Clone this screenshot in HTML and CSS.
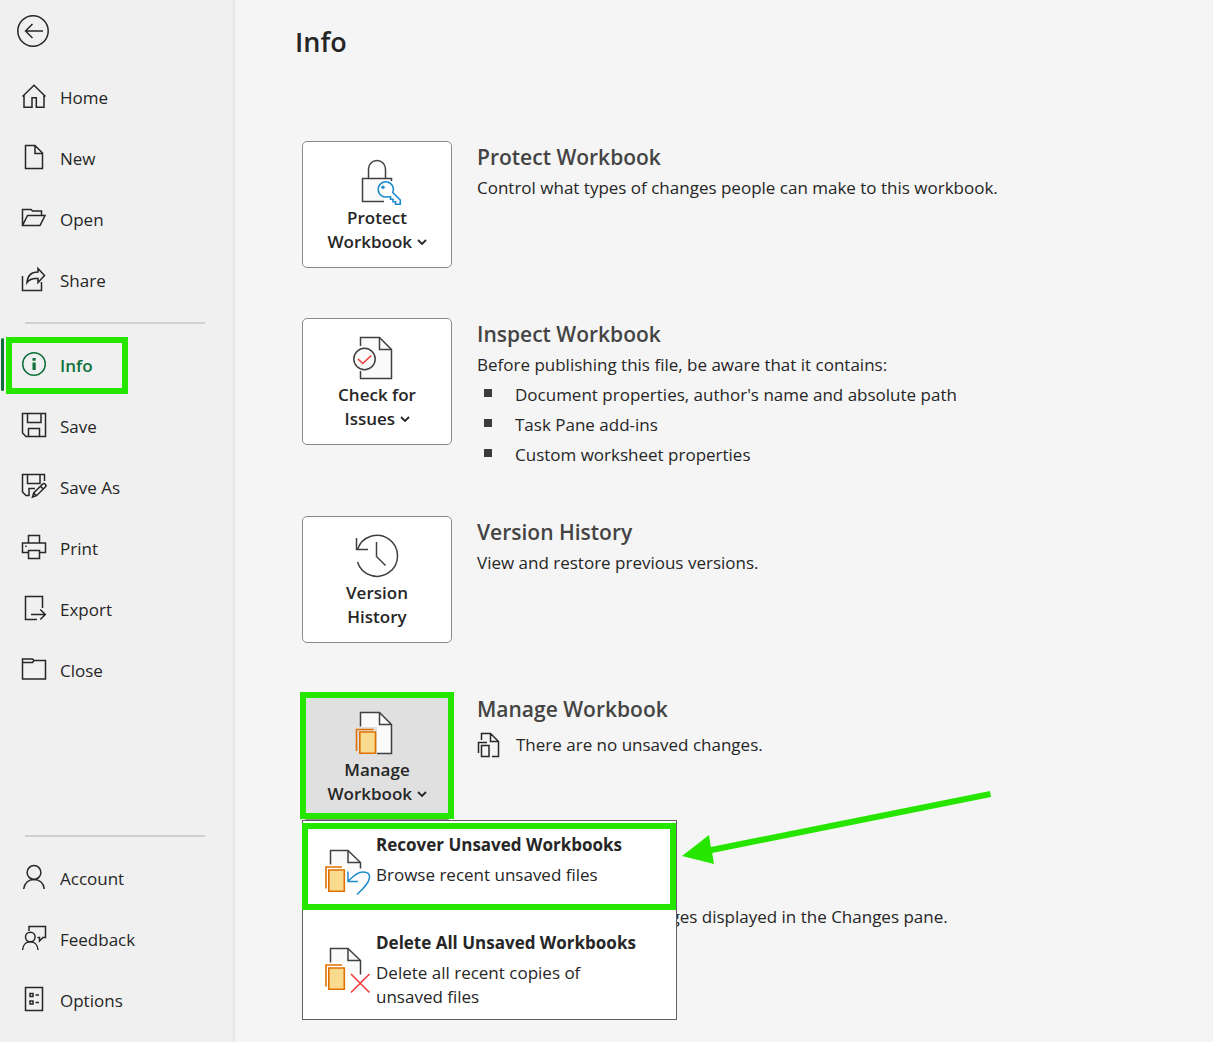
FILE: index.html
```
<!DOCTYPE html>
<html lang="en">
<head>
    <meta charset="UTF-8">
    <meta name="viewport" content="width=device-width, initial-scale=1.0">
    <title>Info</title>
    <link rel="stylesheet" href="styles.css">
</head>
<body>
    <div class="app">
        <nav class="sidebar">
            <button class="back" aria-label="Back">
                <svg width="32" height="32" viewBox="0 0 32 32"><circle cx="16" cy="16" r="15.2"/><path d="M26 16H8.5M15.5 9l-7 7 7 7"/></svg>
            </button>

            <ul class="nav-list">
                <li><a href="#" class="nav-item">
                    <svg class="icon" viewBox="0 0 24 24"><path d="M.5 12.5L12 1.2l11.5 11.3M2 11.5v11.8h8v-9.6h4.3v9.6H22V11.5"/></svg>
                    Home</a></li>
                <li><a href="#" class="nav-item">
                    <svg class="icon" viewBox="0 0 24 24"><path d="M3.5 .5H13L20.500 8v15.500h-17zM13 .5V8.500h7.500"/></svg>
                    New</a></li>
                <li><a href="#" class="nav-item">
                    <svg class="icon" viewBox="0 0 24 24"><path d="M.5 19.500v-16H9L10.500 5h9v4.500M.5 19.500l5-10H23l-5 10z"/></svg>
                    Open</a></li>
                <li><a href="#" class="nav-item">
                    <svg class="icon" viewBox="0 0 24 24"><path d="M.5 9v14.500h19V15M16 1.500l6.500 7-6.500 7v-4C11 11 7.500 12 5 15.500 5.500 9 9.500 5 16 5z"/></svg>
                    Share</a></li>
            </ul>

            <hr class="divider">

            <ul class="nav-list">
                <li><a href="#" class="nav-item active">
                    <svg class="icon" viewBox="0 0 24 24"><circle cx="12" cy="12" r="11.3"/><path class="solid" d="M10.500 6h3.200v2.800h-3.200zM10.500 10.500h3.200V18h-3.200z"/></svg>
                    Info</a></li>
                <li><a href="#" class="nav-item">
                    <svg class="icon" viewBox="0 0 24 24"><path d="M.5 .5h23v23H4L.5 20zM5.500 .5v9H19v-9M6.500 23.500v-8h11v8"/></svg>
                    Save</a></li>
                <li><a href="#" class="nav-item">
                    <svg class="icon" viewBox="0 0 24 24"><path d="M22.500 7V.5H.5V18L4 21.500h3v-7h6M5.500 .5v9H18v-9M10.500 23l1.200-4L20.500 10.200a1.900 1.900 0 0 1 2.800 2.800L14.500 21.700zM18.500 12.200l2.800 2.800M11.700 19l2.800 2.700"/></svg>
                    Save As</a></li>
                <li><a href="#" class="nav-item">
                    <svg class="icon" viewBox="0 0 24 24"><path d="M6.500 17.500h-6V8h23v9.500h-6M6.500 8V.5h11V8M6.500 15.500h11v8h-11z"/><path class="solid" d="M3.200 10.500h1.500V12H3.200z"/></svg>
                    Print</a></li>
                <li><a href="#" class="nav-item">
                    <svg class="icon" viewBox="0 0 24 24"><path d="M15 23.500H3.500V.5h17V12M9 18.500h14M18.300 13.500l5 5-5 5"/></svg>
                    Export</a></li>
                <li><a href="#" class="nav-item">
                    <svg class="icon" viewBox="0 0 24 24"><path d="M.5 2h10L12 3.500h11.500V22H.5zM.5 5.500h10l1.500-2"/></svg>
                    Close</a></li>
            </ul>

            <div class="nav-bottom">
                <hr class="divider">
                <ul class="nav-list">
                    <li><a href="#" class="nav-item">
                        <svg class="icon" viewBox="0 0 24 24"><circle cx="12" cy="7.500" r="6.900"/><path d="M1.700 24C2.200 18 6.500 14.400 12 14.400S21.800 18 22.300 24"/></svg>
                        Account</a></li>
                    <li><a href="#" class="nav-item">
                        <svg class="icon" viewBox="0 0 24 24"><path d="M7 5V.5h16.500v11H21L17.500 15v-3.500h-2"/><circle cx="8.300" cy="11" r="4.800"/><path d="M.6 24c.3-5 3.500-8.200 7.700-8.200S15.700 19 16 24"/></svg>
                        Feedback</a></li>
                    <li><a href="#" class="nav-item">
                        <svg class="icon" viewBox="0 0 24 24"><path d="M3.500 .5h17v23h-17zM8 6.500h3v3H8zM8 14h3v3H8zM13.500 8H17M13.500 15.500H17"/></svg>
                        Options</a></li>
                </ul>
            </div>
        </nav>

        <main class="content">
            <h1>Info</h1>

            <section class="row">
                <button class="tile">
                    <svg class="tile-icon" viewBox="0 0 48 48">
                        <path class="page" d="M31 44.500H9.500v-23h29V24"/>
                        <path class="line" d="M15.500 21.500V12a8.500 8.500 0 0 1 17 0v9.500"/>
                        <path class="key" d="M39.800 35.500A7.600 7.600 0 1 0 35 39.700h2.500v2.500H40v2.500h2.500v2.600h4.800V43z"/>
                        <circle class="key-dot" cx="30" cy="30.300" r="1.700"/>
                    </svg>
                    <span>Protect<br>Workbook <svg class="chevron" viewBox="0 0 10 6"><path d="M1 1l4 4 4-4"/></svg></span>
                </button>
                <div class="info">
                    <h2>Protect Workbook</h2>
                    <p>Control what types of changes people can make to this workbook.</p>
                </div>
            </section>

            <section class="row">
                <button class="tile">
                    <svg class="tile-icon" viewBox="0 0 48 48">
                        <path class="page-fill" d="M7.500 3.500h19l12 12v29h-31z"/>
                        <path class="line" d="M7.500 12V3.500h19l12 12v29h-31V37"/>
                        <path class="line" d="M26.500 3.500v12h12"/>
                        <circle class="page" cx="11.500" cy="25" r="10.700"/>
                        <path class="red" d="M5 25l4.700 4.500L18.300 21.500"/>
                    </svg>
                    <span>Check for<br>Issues <svg class="chevron" viewBox="0 0 10 6"><path d="M1 1l4 4 4-4"/></svg></span>
                </button>
                <div class="info">
                    <h2>Inspect Workbook</h2>
                    <p>Before publishing this file, be aware that it contains:</p>
                    <ul class="issues">
                        <li>Document properties, author's name and absolute path</li>
                        <li>Task Pane add-ins</li>
                        <li>Custom worksheet properties</li>
                    </ul>
                </div>
            </section>

            <section class="row">
                <button class="tile">
                    <svg class="tile-icon" viewBox="0 0 48 48">
                        <path class="line" d="M3.500 6v11.500H15M4.600 17.300A20.500 20.500 0 1 1 4.500 30M23.500 10v14.500l9 9"/>
                    </svg>
                    <span>Version<br>History</span>
                </button>
                <div class="info">
                    <h2>Version History</h2>
                    <p>View and restore previous versions.</p>
                </div>
            </section>

            <section class="row">
                <div class="dropdown">
                    <button class="tile open" aria-expanded="true">
                        <svg class="tile-icon" viewBox="0 0 48 48">
                            <path class="page-fill" d="M7.500 18V3.500h19l12 12v29H24V18z"/>
                            <path class="line" d="M7.500 17.500v-14h19l12 12v29H24M26.500 3.500v12h12"/>
                            <path class="orange-line" d="M3.500 42V20.500h17"/>
                            <path class="orange" d="M6.800 23h15.700v21.300H6.800z"/>
                        </svg>
                        <span>Manage<br>Workbook <svg class="chevron" viewBox="0 0 10 6"><path d="M1 1l4 4 4-4"/></svg></span>
                    </button>
                    <div class="menu">
                        <button class="menu-item marked">
                            <svg class="menu-icon" viewBox="0 0 48 48">
                                <path class="page-fill" d="M6.500 2.500H24l12.500 12V24l-14 4V17h-16z"/>
                                <path class="line" d="M6.500 16.500v-14H24l12.500 12v6M24 2.500v12h12.500"/>
                                <path class="orange-line" d="M2 40.500V19h16"/>
                                <path class="orange" d="M4.800 22h15.500v21.300H4.800z"/>
                                <path class="blue" d="M24 23.500v10h10M24.300 33C30 27 34 24 39 24c4.500 0 7 2 6.500 5.500C45 35 40 40 33 46.500"/>
                            </svg>
                            <span class="menu-text">
                                <strong>Recover Unsaved Workbooks</strong>
                                <span>Browse recent unsaved files</span>
                            </span>
                        </button>
                        <button class="menu-item">
                            <svg class="menu-icon" viewBox="0 0 48 48">
                                <path class="page-fill" d="M6.500 2.500H24l12.500 12V28l-14 2V17h-16z"/>
                                <path class="line" d="M6.500 16.500v-14H24l12.500 12v14M24 2.500v12h12.500"/>
                                <path class="orange-line" d="M2 40.500V19h16"/>
                                <path class="orange" d="M4.800 22h15.500v21.300H4.800z"/>
                                <path class="red" d="M27 28l18.500 18.500M45.500 28L27 46.500"/>
                            </svg>
                            <span class="menu-text">
                                <strong>Delete All Unsaved Workbooks</strong>
                                <span>Delete all recent copies of unsaved files</span>
                            </span>
                        </button>
                    </div>
                    <svg class="arrow" viewBox="0 0 312 72"><path d="M0 62L27 41l1.800 12L308 -3l1 6L30.200 59l1.800 11z"/></svg>
                </div>
                <div class="info">
                    <h2>Manage Workbook</h2>
                    <p class="status">
                        <svg class="status-icon" viewBox="0 0 22 24"><path d="M3.500 7V.5h9l8 8v15H14M12.500 .5v8h8M.5 20V9.500H9M3.500 12.500H11v11H3.500z"/></svg>
                        There are no unsaved changes.
                    </p>
                </div>
            </section>

            <section class="row changes">
                <p>changes displayed in the Changes pane.</p>
            </section>
        </main>
    </div>
</body>
</html>
```
FILE: styles.css
```
*,
*::before,
*::after {
    margin: 0;
    padding: 0;
    box-sizing: border-box;
}

body {
    font-family: "Open Sans", "Noto Sans", sans-serif;
    font-size: 17px;
    color: #262626;
    background-color: #f5f5f5;
}

button {
    font: inherit;
    color: inherit;
    cursor: pointer;
}

ul {
    list-style: none;
}

svg {
    fill: none;
    stroke: #262626;
    stroke-width: 1.5;
    flex-shrink: 0;
    overflow: visible;
}

.app {
    display: flex;
    min-height: 100vh;
}

/* Sidebar */
.sidebar {
    display: flex;
    flex-direction: column;
    width: 235px;
    flex-shrink: 0;
    padding: 15px 0 11px;
    background-color: #f0f0f0;
    border-right: 2px solid #e6e6e6;
}

.back {
    width: 32px;
    height: 32px;
    margin: 0 0 20px 17px;
    background: none;
    border: none;
}

.back svg {
    display: block;
}

.nav-item {
    display: flex;
    align-items: center;
    gap: 14px;
    height: 61px;
    padding-left: 22px;
    color: #262626;
    text-decoration: none;
}

.icon {
    width: 24px;
    height: 24px;
    margin-bottom: 3px;
}

.icon .solid {
    fill: currentColor;
    stroke: none;
}

.divider {
    height: 2px;
    margin: 11px 28px 11px 25px;
    border: none;
    background-color: #d0d0d0;
}

.nav-item.active {
    position: relative;
    color: #0f703b;
    font-weight: 600;
}

.nav-item.active svg {
    stroke: #0f703b;
}

.nav-item.active::before {
    content: "";
    position: absolute;
    left: 1px;
    top: 3px;
    width: 3px;
    height: 53px;
    border-radius: 2px;
    background-color: #0f703b;
}

/* Green marker boxes */
.nav-item.active::after,
.tile.open::after,
.menu-item.marked::after {
    content: "";
    position: absolute;
    border: 6px solid #26e600;
}

.nav-item.active::after {
    left: 6px;
    top: 2px;
    width: 122px;
    height: 57px;
}

.nav-bottom {
    margin-top: auto;
}

/* Content */
.content {
    flex: 1;
    padding: 22px 60px 0;
}

h1 {
    height: 119px;
    font-size: 27px;
    line-height: 40px;
    font-weight: 600;
}

.row {
    display: flex;
    gap: 25px;
    min-height: 131px;
    margin: 0 0 46px 7px;
}

.row:last-child {
    margin-bottom: 0;
}

.tile {
    display: flex;
    flex-direction: column;
    align-items: center;
    flex-shrink: 0;
    width: 150px;
    height: 127px;
    padding-top: 15px;
    line-height: 24px;
    font-weight: 600;
    background-color: #fff;
    border: 1px solid #8a8a8a;
    border-radius: 5px;
}

.tile-icon {
    width: 48px;
    height: 48px;
    margin-bottom: 1px;
}

.chevron {
    width: 10px;
    height: 6px;
    margin-bottom: 3px;
    stroke-width: 1.8;
}

.line,
.page {
    stroke: #404040;
}

.page,
.page-fill {
    fill: #fafafa;
}

.page-fill {
    stroke: none;
}

.key {
    fill: #fff;
    stroke: #1e8bcd;
    stroke-width: 1.6;
}

.key-dot {
    fill: #1e8bcd;
    stroke: none;
}

.red {
    stroke: #f03c3c;
    stroke-width: 1.6;
}

.blue {
    stroke: #1e8bcd;
    stroke-width: 1.5;
}

.orange-line {
    stroke: #e07000;
    stroke-width: 1.6;
}

.orange {
    fill: #f8db8f;
    stroke: #e07000;
    stroke-width: 1.6;
}

h2 {
    font-size: 21px;
    line-height: 32px;
    font-weight: 600;
    color: #444;
}

.info {
    line-height: 30px;
}

.issues li {
    display: flex;
    align-items: center;
    gap: 23px;
    padding-left: 7px;
}

.issues li::before {
    content: "";
    width: 8px;
    height: 8px;
    margin-bottom: 5px;
    background-color: #3b3b3b;
}

.status {
    display: flex;
    align-items: center;
    gap: 16px;
    margin: 5px 0 0 1px;
}

.status-icon {
    width: 22px;
    height: 24px;
}

/* Manage Workbook drop-down */
.dropdown {
    position: relative;
    width: 150px;
}

.tile.open {
    position: relative;
    background-color: #e0e0e0;
}

.tile.open::after {
    inset: -2px -3px 0;
}

.menu {
    position: absolute;
    top: 127px;
    left: 0;
    z-index: 1;
    width: 375px;
    background-color: #fff;
    border: 1px solid #606060;
}

.menu-item {
    position: relative;
    display: flex;
    align-items: flex-start;
    gap: 4px;
    width: 100%;
    min-height: 98px;
    padding: 12px 21px 10px;
    line-height: 24px;
    text-align: left;
    background: none;
    border: none;
}

.menu-item.marked::after {
    inset: 2px 0 9px -1px;
}

.menu-icon {
    width: 48px;
    height: 48px;
    margin-top: 15px;
}

.menu-text {
    display: flex;
    flex-direction: column;
    gap: 6px;
    max-width: 264px;
}

.menu-text strong {
    white-space: nowrap;
}

.arrow {
    position: absolute;
    top: 101px;
    left: 380px;
    z-index: 1;
    width: 312px;
    height: 72px;
}

.arrow path {
    fill: #26e600;
    stroke: none;
}

/* Runs in behind the open menu */
.changes {
    padding: 32px 0 0 330px;
    line-height: 30px;
}
```
